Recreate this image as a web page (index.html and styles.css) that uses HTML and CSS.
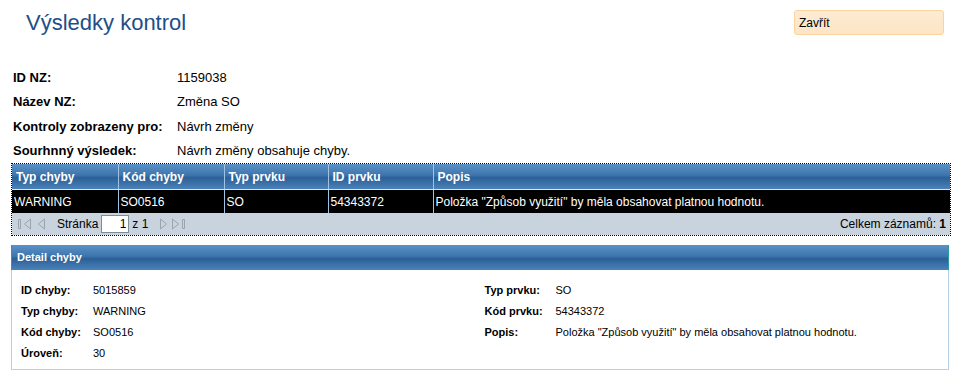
FILE: index.html
```html
<!DOCTYPE html>
<html lang="cs">
<head>
    <meta charset="UTF-8">
    <title>Výsledky kontrol</title>
    <link rel="stylesheet" href="styles.css">
</head>
<body>
    <div class="page">
        <div class="top">
            <h1>Výsledky kontrol</h1>
            <button class="close">Zavřít</button>
        </div>

        <!-- Summary -->
        <table class="info">
            <tr><th>ID NZ:</th><td>1159038</td></tr>
            <tr><th>Název NZ:</th><td>Změna SO</td></tr>
            <tr><th>Kontroly zobrazeny pro:</th><td>Návrh změny</td></tr>
            <tr><th>Sourhnný výsledek:</th><td>Návrh změny obsahuje chyby.</td></tr>
        </table>

        <!-- Error grid -->
        <div class="grid">
            <table>
                <colgroup>
                    <col style="width: 106px">
                    <col style="width: 106px">
                    <col style="width: 104px">
                    <col style="width: 105px">
                    <col>
                </colgroup>
                <thead>
                    <tr>
                        <th>Typ chyby</th>
                        <th>Kód chyby</th>
                        <th>Typ prvku</th>
                        <th>ID prvku</th>
                        <th>Popis</th>
                    </tr>
                </thead>
                <tbody>
                    <tr class="selected">
                        <td>WARNING</td>
                        <td>SO0516</td>
                        <td>SO</td>
                        <td>54343372</td>
                        <td>Položka "Způsob využití" by měla obsahovat platnou hodnotu.</td>
                    </tr>
                </tbody>
            </table>
            <div class="pager">
                <div class="pager-left">
                    <svg class="pg" width="18" height="12" viewBox="0 0 18 12">
                        <path d="M1.5 1.5h2v9h-2z" fill="none" stroke="#9aa3ad"/>
                        <path d="M13.5 1v10l-6-5z" fill="none" stroke="#9aa3ad"/>
                    </svg>
                    <svg class="pg" width="10" height="12" viewBox="0 0 10 12">
                        <path d="M7.5 1v10l-6-5z" fill="none" stroke="#9aa3ad"/>
                    </svg>
                    <span class="sep"></span>
                    <span>Stránka</span>
                    <input class="page-input" value="1">
                    <span>z 1</span>
                    <span class="sep"></span>
                    <svg class="pg" width="10" height="12" viewBox="0 0 10 12">
                        <path d="M2.5 1v10l6-5z" fill="none" stroke="#9aa3ad"/>
                    </svg>
                    <svg class="pg" width="18" height="12" viewBox="0 0 18 12">
                        <path d="M2.5 1v10l6-5z" fill="none" stroke="#9aa3ad"/>
                        <path d="M12.5 1.5h2v9h-2z" fill="none" stroke="#9aa3ad"/>
                    </svg>
                </div>
                <div class="total">Celkem záznamů: <b>1</b></div>
            </div>
        </div>

        <!-- Detail -->
        <div class="detail">
            <div class="detail-head">Detail chyby</div>
            <div class="detail-body">
                <table class="dl">
                    <tr><th>ID chyby:</th><td>5015859</td></tr>
                    <tr><th>Typ chyby:</th><td>WARNING</td></tr>
                    <tr><th>Kód chyby:</th><td>SO0516</td></tr>
                    <tr><th>Úroveň:</th><td>30</td></tr>
                </table>
                <table class="dl dl-right">
                    <tr><th>Typ prvku:</th><td>SO</td></tr>
                    <tr><th>Kód prvku:</th><td>54343372</td></tr>
                    <tr><th>Popis:</th><td>Položka "Způsob využití" by měla obsahovat platnou hodnotu.</td></tr>
                </table>
            </div>
        </div>
    </div>
</body>
</html>
```
FILE: styles.css
```css
body {
    margin: 0;
    font-family: "Liberation Sans", Arial, sans-serif;
    color: #000;
    background: #fff;
}
.page {
    padding: 0 14px 0 11px;
}
.top {
    display: flex;
    justify-content: space-between;
    align-items: flex-start;
    height: 65px;
    padding-right: 7px;
}
h1 {
    margin: 10px 0 0 15px;
    font-size: 22px;
    font-weight: normal;
    color: #1e4f86;
}
.close {
    margin-top: 10px;
    width: 150px;
    height: 25px;
    padding: 0 4px;
    text-align: left;
    font-family: inherit;
    font-size: 12px;
    color: #000;
    background: linear-gradient(#fdebd3, #fde5c6);
    border: 1px solid #f9d49c;
    border-radius: 3px;
}
.info {
    border-collapse: collapse;
    font-size: 13px;
    margin-left: 2px;
}
.info th {
    text-align: left;
    font-weight: bold;
    height: 24.5px;
    width: 164px;
    padding: 0;
}
.info td {
    padding: 0;
}
.grid {
    margin-top: 0;
    width: 938px;
    border: 1px dotted #000;
}
.grid table {
    width: 100%;
    border-collapse: collapse;
    table-layout: fixed;
    font-size: 12px;
}
.grid th {
    height: 25px;
    padding: 0 0 0 4px;
    text-align: left;
    color: #fff;
    font-weight: bold;
    background: linear-gradient(#5b93c8 0%, #3d74ac 45%, #2b5f97 55%, #4b82ba 100%);
    border-left: 1px solid #9ec3e4;
    border-bottom: 1px solid #d6e6f3;
}
.grid th:first-child,
.grid td:first-child {
    border-left: none;
}
.grid td {
    height: 23px;
    padding: 0 0 0 2px;
    white-space: nowrap;
    border-left: 1px solid #9ec3e4;
}
.selected td {
    background: #000;
    color: #fff;
}
.pager {
    display: flex;
    justify-content: space-between;
    align-items: center;
    height: 22px;
    padding: 0 4px 0 5px;
    background: #c8d3de;
    font-size: 12px;
}
.pager-left {
    display: flex;
    align-items: center;
    gap: 2px;
}
.pg {
    display: block;
}
.sep {
    width: 6px;
}
.page-input {
    width: 22px;
    height: 16px;
    padding: 0 2px;
    margin: 0 1px;
    border: 1px solid #7f8b98;
    text-align: right;
    font-family: inherit;
    font-size: 12px;
}
.detail {
    margin-top: 9px;
    width: 938px;
}
.detail-head {
    height: 25px;
    line-height: 25px;
    padding-left: 5px;
    color: #fff;
    font-size: 11px;
    font-weight: bold;
    background: linear-gradient(#5b93c8 0%, #3d74ac 45%, #2b5f97 55%, #4b82ba 100%);
    border-left: 1px solid #2a9aa4;
    border-right: 1px solid #2a9aa4;
}
.detail-body {
    display: flex;
    align-items: flex-start;
    box-sizing: border-box;
    height: 100px;
    padding-top: 9px;
    border: 1px solid #b3d0e8;
    border-top: none;
}
.dl {
    border-collapse: collapse;
    font-size: 11px;
    margin-left: 9px;
    width: 469px;
}
.dl th {
    text-align: left;
    font-weight: bold;
    height: 21px;
    width: 72px;
    padding: 0;
}
.dl td {
    padding: 0;
}
.dl-right {
    margin-left: 0;
}
.dl-right th {
    width: 71px;
}
```
